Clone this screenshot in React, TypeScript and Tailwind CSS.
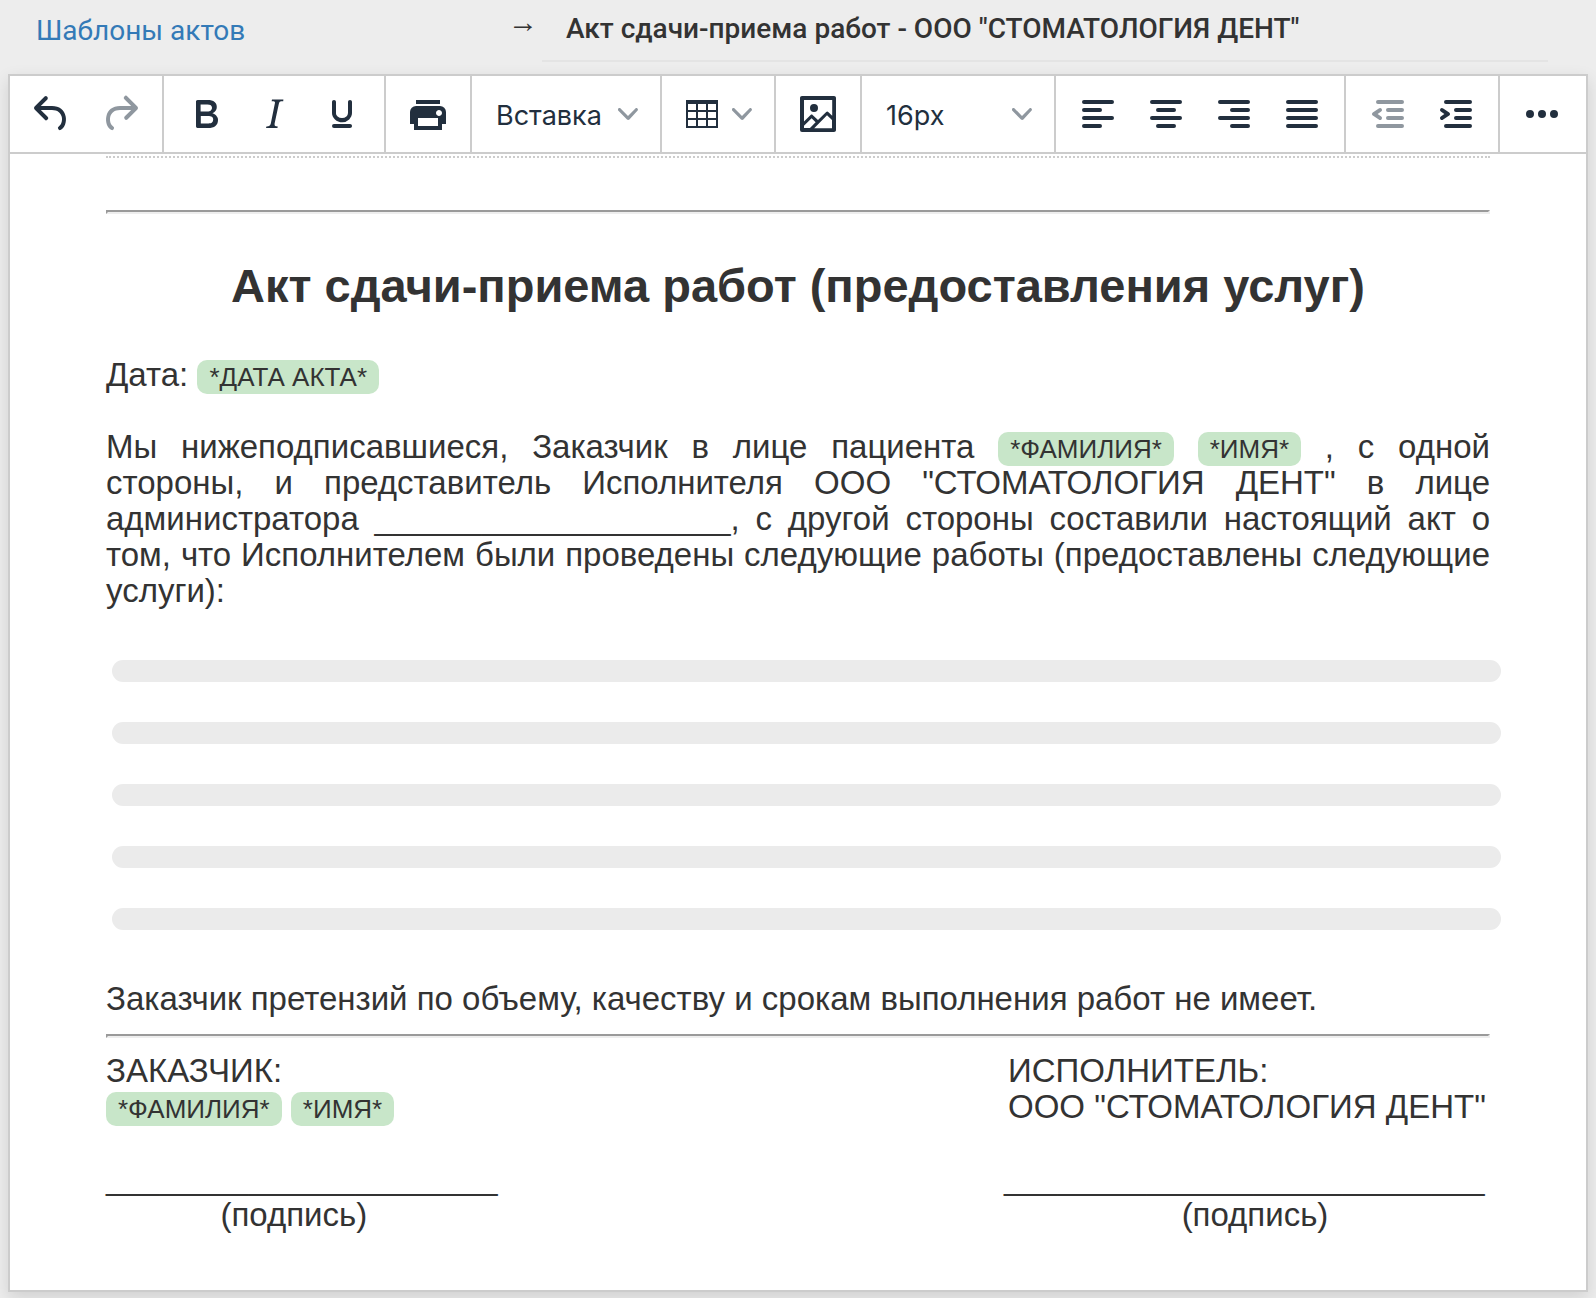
import type { ReactNode } from "react";
import { useState } from "react";
import clsx from "clsx";

const ICONS = {
  undo: "M6.4 8H12c3.7 0 6.2 2 6.8 5.1.6 2.7-.4 5.6-2.3 6.8a1 1 0 0 1-1-1.8c1.1-.6 1.8-2.7 1.4-4.6-.5-2.1-2.1-3.5-4.9-3.5H6.4l3.3 3.3a1 1 0 1 1-1.4 1.4l-5-5a1 1 0 0 1 0-1.4l5-5a1 1 0 0 1 1.4 1.4L6.4 8Z",
  redo: "M17.6 10H12c-2.8 0-4.4 1.4-4.9 3.5-.4 2 .3 4 1.4 4.6a1 1 0 1 1-1 1.8c-2-1.2-2.9-4.1-2.3-6.8.6-3 3-5.1 6.8-5.1h5.6l-3.3-3.3a1 1 0 1 1 1.4-1.4l5 5a1 1 0 0 1 0 1.4l-5 5a1 1 0 0 1-1.4-1.4l3.3-3.3Z",
  bold: "M7.8 19c-.3 0-.5 0-.6-.2l-.2-.5V5.7c0-.2 0-.4.2-.5l.6-.2h5c1.5 0 2.7.3 3.5 1 .7.6 1.1 1.4 1.1 2.5a3 3 0 0 1-.6 1.9c-.4.6-1 1-1.6 1.2.4.1.9.3 1.3.6s.8.7 1 1.2c.4.4.5 1 .5 1.6 0 1.3-.4 2.3-1.3 3-.8.7-2.1 1-3.8 1H7.8Zm5-8.3c.6 0 1.2-.1 1.6-.5.4-.3.6-.7.6-1.3 0-1.1-.8-1.7-2.3-1.7H9.3v3.5h3.4Zm.5 6c.7 0 1.3-.1 1.7-.4.4-.4.6-.9.6-1.5s-.2-1-.7-1.4c-.4-.3-1-.4-2-.4H9.4v3.8h4Z",
  italic:
    "m16.7 4.7-.1.9h-.3c-.6 0-1 0-1.4.3-.3.3-.4.6-.5 1.1l-2.1 9.8v.6c0 .5.4.8 1.4.8h.2l-.2.8H8l.2-.8h.2c1.1 0 1.8-.5 2-1.5l2-9.8.1-.5c0-.6-.4-.8-1.4-.8h-.3l.2-.9h5.8Z",
  underline:
    "M16 5c.6 0 1 .4 1 1v5.5a4 4 0 0 1-.4 1.8l-1 1.4a5.3 5.3 0 0 1-5.5 1 5 5 0 0 1-1.6-1c-.5-.4-.8-.9-1.1-1.4a4 4 0 0 1-.4-1.8V6c0-.6.4-1 1-1s1 .4 1 1v5.5c0 .3 0 .6.2 1l.6.7a3.3 3.3 0 0 0 2.2.8 3.4 3.4 0 0 0 2.2-.8c.3-.2.4-.5.6-.8l.2-.9V6c0-.6.4-1 1-1ZM8 17h8c.6 0 1 .4 1 1s-.4 1-1 1H8a1 1 0 0 1 0-2Z",
  print:
    "M18 8H6a3 3 0 0 0-3 3v6h2v3h14v-3h2v-6a3 3 0 0 0-3-3Zm-1 10H7v-4h10v4Zm.5-5c-.8 0-1.5-.7-1.5-1.5s.7-1.5 1.5-1.5 1.5.7 1.5 1.5-.7 1.5-1.5 1.5Zm.5-8H6v2h12V5Z",
  table:
    "M4 5h16v14H4V5Zm1 2v3h4V7H5Zm5 0v3h4V7h-4Zm5 0v3h4V7h-4ZM5 11v3h4v-3H5Zm5 0v3h4v-3h-4Zm5 0v3h4v-3h-4ZM5 15v3h4v-3H5Zm5 0v3h4v-3h-4Zm5 0v3h4v-3h-4Z",
  image:
    "m5 15.7 3.3-3.2c.3-.3.7-.3 1 0L12 15l4.1-4c.3-.4.8-.4 1 0l2 1.9V5H5v10.7ZM5 18V19h3l2.8-2.9-2-2L5 17.9Zm14-3-2.5-2.4-6.4 6.5H19v-4ZM4 3h16c.6 0 1 .4 1 1v16c0 .6-.4 1-1 1H4a1 1 0 0 1-1-1V4c0-.6.4-1 1-1Zm6 8a2 2 0 1 0 0-4 2 2 0 0 0 0 4Z",
  alignLeft:
    "M5 5h14a1 1 0 0 1 0 2H5a1 1 0 1 1 0-2Zm0 4h8a1 1 0 0 1 0 2H5a1 1 0 1 1 0-2Zm0 8h8a1 1 0 0 1 0 2H5a1 1 0 0 1 0-2Zm0-4h14a1 1 0 0 1 0 2H5a1 1 0 0 1 0-2Z",
  alignCenter:
    "M5 5h14a1 1 0 0 1 0 2H5a1 1 0 1 1 0-2Zm3 4h8a1 1 0 0 1 0 2H8a1 1 0 1 1 0-2Zm0 8h8a1 1 0 0 1 0 2H8a1 1 0 0 1 0-2Zm-3-4h14a1 1 0 0 1 0 2H5a1 1 0 0 1 0-2Z",
  alignRight:
    "M5 5h14a1 1 0 0 1 0 2H5a1 1 0 1 1 0-2Zm6 4h8a1 1 0 0 1 0 2h-8a1 1 0 0 1 0-2Zm0 8h8a1 1 0 0 1 0 2h-8a1 1 0 0 1 0-2Zm-6-4h14a1 1 0 0 1 0 2H5a1 1 0 0 1 0-2Z",
  alignJustify:
    "M5 5h14a1 1 0 0 1 0 2H5a1 1 0 1 1 0-2Zm0 4h14a1 1 0 0 1 0 2H5a1 1 0 1 1 0-2Zm0 4h14a1 1 0 0 1 0 2H5a1 1 0 0 1 0-2Zm0 4h14a1 1 0 0 1 0 2H5a1 1 0 0 1 0-2Z",
  outdent:
    "M7 5h12a1 1 0 0 1 0 2H7a1 1 0 1 1 0-2Zm5 4h7a1 1 0 0 1 0 2h-7a1 1 0 0 1 0-2Zm0 4h7a1 1 0 0 1 0 2h-7a1 1 0 0 1 0-2Zm-5 4h12a1 1 0 0 1 0 2H7a1 1 0 0 1 0-2Zm1.6-3.8a1 1 0 0 1-1.2 1.6l-3-2a1 1 0 0 1 0-1.6l3-2a1 1 0 0 1 1.2 1.6L6.8 12l1.8 1.2Z",
  indent:
    "M7 5h12a1 1 0 0 1 0 2H7a1 1 0 1 1 0-2Zm5 4h7a1 1 0 0 1 0 2h-7a1 1 0 0 1 0-2Zm0 4h7a1 1 0 0 1 0 2h-7a1 1 0 0 1 0-2Zm-5 4h12a1 1 0 0 1 0 2H7a1 1 0 0 1 0-2Zm-2.6-3.8L6.2 12l-1.8-1.2a1 1 0 0 1 1.2-1.6l3 2a1 1 0 0 1 0 1.6l-3 2a1 1 0 1 1-1.2-1.6Z",
  more: "M6 10a2 2 0 1 0 0 4 2 2 0 0 0 0-4Zm6 0a2 2 0 1 0 0 4 2 2 0 0 0 0-4Zm6 0a2 2 0 1 0 0 4 2 2 0 0 0 0-4Z",
};

type IconName = keyof typeof ICONS;

function Icon({ name }: { name: IconName }) {
  return (
    <svg aria-hidden viewBox="0 0 24 24" className="size-12 shrink-0" fill="currentColor" fillRule="evenodd">
      <path d={ICONS[name]} />
    </svg>
  );
}

function Chevron({ className }: { className?: string }) {
  return (
    <svg
      aria-hidden
      viewBox="0 0 10 10"
      className={clsx("size-5 shrink-0 text-[#8f979f]", className)}
      fill="currentColor"
    >
      <path d="M8.7 2.2c.3-.3.8-.3 1 0 .4.4.4.9 0 1.2L5.7 7.8c-.3.3-.9.3-1.2 0L.2 3.4a.8.8 0 0 1 0-1.2c.3-.3.8-.3 1.1 0L5 6l3.7-3.8Z" />
    </svg>
  );
}

function ToolButton({ icon, label, disabled }: { icon: IconName; label: string; disabled?: boolean }) {
  return (
    <button
      type="button"
      aria-label={label}
      title={label}
      disabled={disabled}
      className="flex h-[68px] w-[68px] items-center justify-center rounded-md hover:bg-[#dee0e2] disabled:bg-transparent disabled:text-[#8f979f]"
    >
      <Icon name={icon} />
    </button>
  );
}

function Group({ children }: { children: ReactNode }) {
  return (
    <div role="group" className="flex items-center border-r-2 border-[#ccc] px-2 last:border-r-0">
      {children}
    </div>
  );
}

function Toolbar() {
  const [size, setSize] = useState("16px");

  return (
    <div role="toolbar" className="flex h-[78px] border-b-2 border-[#ccc] font-['Inter',sans-serif] text-[27px] text-[#222f3e]">
      <Group>
        <ToolButton icon="undo" label="Отменить" />
        <ToolButton icon="redo" label="Вернуть" disabled />
      </Group>
      <Group>
        <ToolButton icon="bold" label="Полужирный" />
        <ToolButton icon="italic" label="Курсив" />
        <ToolButton icon="underline" label="Подчеркнутый" />
      </Group>
      <Group>
        <ToolButton icon="print" label="Печать" />
      </Group>
      <Group>
        <button type="button" aria-haspopup="menu" className="flex h-[68px] w-[172px] items-center justify-between pr-3.5 pl-4">
          <span className="pt-1">Вставка</span>
          <Chevron />
        </button>
      </Group>
      <Group>
        <button type="button" aria-haspopup="menu" aria-label="Таблица" className="flex h-[68px] w-24 items-center justify-between pr-3.5 pl-2">
          <Icon name="table" />
          <Chevron />
        </button>
      </Group>
      <Group>
        <ToolButton icon="image" label="Изображение" />
      </Group>
      <Group>
        <div className="relative flex items-center">
          <select
            aria-label="Размер шрифта"
            value={size}
            onChange={(e) => setSize(e.target.value)}
            className="h-[68px] w-44 appearance-none bg-transparent pt-1 pl-4 outline-none"
          >
            <option>12px</option>
            <option>14px</option>
            <option>16px</option>
            <option>18px</option>
          </select>
          <Chevron className="pointer-events-none absolute right-3.5" />
        </div>
      </Group>
      <Group>
        <ToolButton icon="alignLeft" label="По левому краю" />
        <ToolButton icon="alignCenter" label="По центру" />
        <ToolButton icon="alignRight" label="По правому краю" />
        <ToolButton icon="alignJustify" label="По ширине" />
      </Group>
      <Group>
        <ToolButton icon="outdent" label="Уменьшить отступ" disabled />
        <ToolButton icon="indent" label="Увеличить отступ" />
      </Group>
      <Group>
        <ToolButton icon="more" label="Ещё" />
      </Group>
    </div>
  );
}

function Tag({ children }: { children: ReactNode }) {
  return (
    <span className="rounded-[10px] bg-[#c8e6c9] px-3 py-0.5 text-[26px] leading-none whitespace-nowrap">
      {children}
    </span>
  );
}

// place to be filled in by hand on the printed act
function Blank({ length }: { length: number }) {
  return <span className="text-[32px] leading-none">{"_".repeat(length)}</span>;
}

function Rule() {
  return <hr className="h-1 border-2 border-t-[#9a9a9a] border-r-[#eee] border-b-[#eee] border-l-[#9a9a9a]" />;
}

function Document() {
  return (
    <article className="px-24 pt-0.5 pb-14 font-['Liberation_Sans',Arial,sans-serif] text-[33px] leading-9 text-[#333]">
      <div className="mb-[52px] border-t-2 border-dotted border-[#ccc]" />
      <Rule />
      <h1 className="mt-11 mb-[43px] text-center text-[47px] leading-[56px] font-bold">
        Акт сдачи-приема работ (предоставления услуг)
      </h1>
      <p>
        Дата: <Tag>*ДАТА АКТА*</Tag>
      </p>
      <p className="mt-9 text-justify">
        <span className="block [text-align-last:justify]">
          Мы нижеподписавшиеся, Заказчик в лице пациента <Tag>*ФАМИЛИЯ*</Tag> <Tag>*ИМЯ*</Tag> , с одной
        </span>
        <span className="block [text-align-last:justify]">
          стороны, и представитель Исполнителя ООО "СТОМАТОЛОГИЯ ДЕНТ" в лице
        </span>
        <span className="block [text-align-last:justify]">
          администратора <Blank length={20} />, с другой стороны составили настоящий акт о
        </span>
        <span className="block [text-align-last:justify]">
          том, что Исполнителем были проведены следующие работы (предоставлены следующие
        </span>
        <span className="block">услуги):</span>
      </p>
      <div className="-mr-[11px] ml-1.5 flex flex-col gap-10 py-[51px]">
        {[1, 2, 3, 4, 5].map((row) => (
          <div key={row} className="h-[22px] rounded-full bg-[#ebebeb]" />
        ))}
      </div>
      <p className="mb-[17px]">Заказчик претензий по объему, качеству и срокам выполнения работ не имеет.</p>
      <Rule />
      <div className="mt-[15px] flex justify-between">
        <div>
          <p>ЗАКАЗЧИК:</p>
          <p>
            <Tag>*ФАМИЛИЯ*</Tag> <Tag>*ИМЯ*</Tag>
          </p>
          <p className="mt-9">
            <Blank length={22} />
          </p>
          <p className="pr-4 text-center">(подпись)</p>
        </div>
        <div className="w-[486px] whitespace-nowrap">
          <p className="pl-1">ИСПОЛНИТЕЛЬ:</p>
          <p className="pl-1">ООО "СТОМАТОЛОГИЯ ДЕНТ"</p>
          <p className="mt-9">
            <Blank length={27} />
          </p>
          <p className="pl-4 text-center">(подпись)</p>
        </div>
      </div>
    </article>
  );
}

export default function App() {
  return (
    <div className="flex min-h-screen flex-col bg-[#ededed] px-2 pb-1.5">
      <header className="flex h-[74px] items-start font-['Roboto',sans-serif] text-[28px] leading-8 text-[#333]">
        <nav className="flex w-[534px] shrink-0 justify-between pr-1 pl-7">
          <a href="#templates" className="pt-[15px] text-[#337ab7]">
            Шаблоны актов
          </a>
          <span className="pt-1.5 font-['Liberation_Sans',sans-serif] text-[30px]">→</span>
        </nav>
        <div className="mr-10 h-[62px] grow border-b-2 border-[#e4e4e4] pt-[13px] pl-6 font-medium">
          Акт сдачи-приема работ - ООО "СТОМАТОЛОГИЯ ДЕНТ"
        </div>
      </header>
      <main className="grow border-2 border-[#ccc] bg-white shadow-[0_6px_16px_rgba(0,0,0,0.12)]">
        <Toolbar />
        <Document />
      </main>
    </div>
  );
}
